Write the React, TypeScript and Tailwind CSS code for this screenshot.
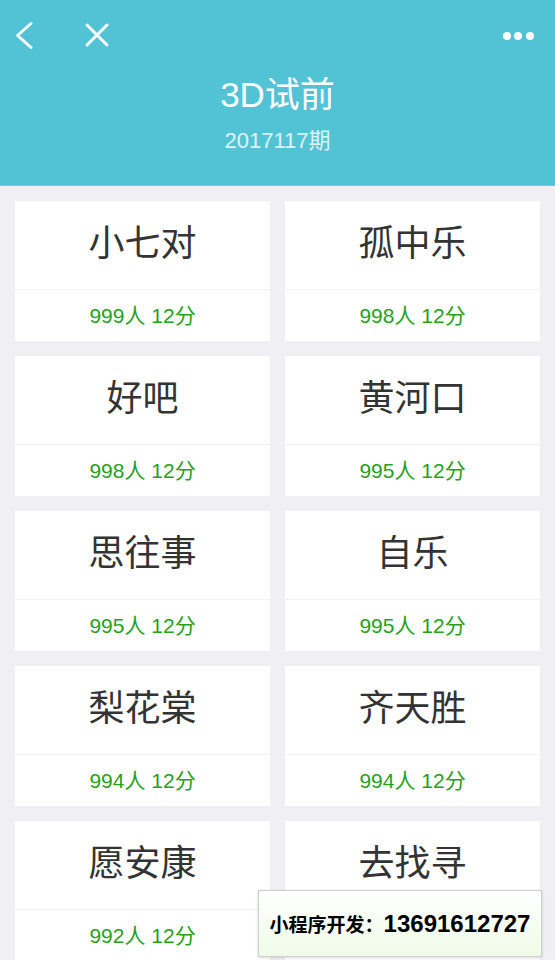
import React from "react";

type Pick = {
  name: string;
  people: number;
  score: number;
};

const picks: Pick[] = [
  { name: "小七对", people: 999, score: 12 },
  { name: "孤中乐", people: 998, score: 12 },
  { name: "好吧", people: 998, score: 12 },
  { name: "黄河口", people: 995, score: 12 },
  { name: "思往事", people: 995, score: 12 },
  { name: "自乐", people: 995, score: 12 },
  { name: "梨花棠", people: 994, score: 12 },
  { name: "齐天胜", people: 994, score: 12 },
  { name: "愿安康", people: 992, score: 12 },
  { name: "去找寻", people: 992, score: 12 },
];

const font = {
  fontFamily: '"Liberation Sans", "Noto Sans CJK SC", sans-serif',
};

function PickCard({ pick }: { pick: Pick }) {
  return (
    <div className="bg-white h-[140px] flex flex-col">
      <div className="h-[89px] pb-[2px] flex items-center justify-center border-b border-[#f2f2f2]">
        <span className="text-[36px] leading-none text-[#333333]">{pick.name}</span>
      </div>
      <div className="flex-1 flex items-center justify-center">
        <span className="text-[21px] leading-none text-[#28a11a]">
          {pick.people}人 {pick.score}分
        </span>
      </div>
    </div>
  );
}

export default function App() {
  return (
    <div className="w-[555px] h-[960px] overflow-hidden bg-[#efeff4] relative" style={font}>
      <div className="h-[186px] bg-[#52c3d4] flex flex-col border-b border-[#6fcbd8]">
        <div className="h-[72px] flex items-center px-[14px]">
          <svg width="20" height="30" viewBox="0 0 20 30" fill="none">
            <path d="M17 2.5 L3.5 14.5 L17 26.5" stroke="white" strokeWidth="3" strokeLinecap="round" strokeLinejoin="round" />
          </svg>
          <svg width="26" height="30" viewBox="0 0 26 30" fill="none" className="ml-[50px]">
            <path d="M3 4 L23 24 M23 4 L3 24" stroke="white" strokeWidth="3" strokeLinecap="round" />
          </svg>
          <div className="flex-1" />
          <svg width="36" height="12" viewBox="0 0 36 12" className="mr-[5px]">
            <circle cx="7" cy="6" r="4" fill="white" />
            <circle cx="18" cy="6" r="4" fill="white" />
            <circle cx="30" cy="6" r="4" fill="white" />
          </svg>
        </div>
        <div className="mt-[3px] text-center text-white text-[35px] leading-[40px]">3D试前</div>
        <div className="mt-[12px] text-center text-white/80 text-[22px] leading-[28px]">2017117期</div>
      </div>

      <div className="grid grid-cols-2 gap-x-[15px] gap-y-[15px] px-[15px] pt-[15px]">
        {picks.map((pick) => (
          <PickCard key={pick.name} pick={pick} />
        ))}
      </div>

      <div className="absolute left-[258px] top-[890px] w-[284px] h-[67px] border border-[#cfcfcf] shadow-[0_1px_3px_rgba(0,0,0,0.15)] bg-gradient-to-b from-white to-[#eefbe6] flex items-center justify-center">
        <span className="text-black font-bold whitespace-nowrap">
          <span className="text-[19px]" style={{ fontFamily: '"Noto Sans CJK SC", sans-serif' }}>小程序开发：</span>
          <span className="text-[24px]">13691612727</span>
        </span>
      </div>
    </div>
  );
}
